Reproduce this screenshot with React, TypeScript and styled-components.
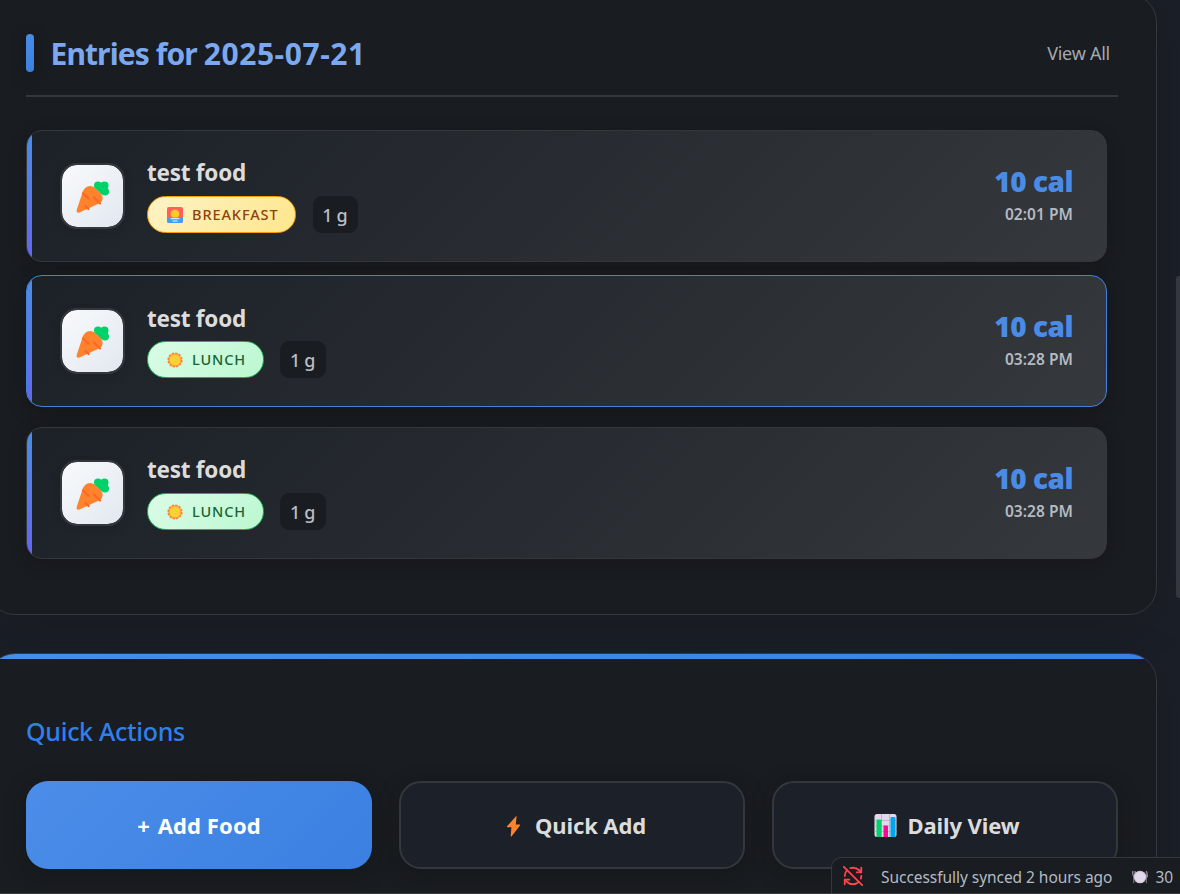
import React from "react";
import styled, { createGlobalStyle, css } from "styled-components";
import { RefreshCwOff } from "lucide-react";

const Global = createGlobalStyle`
  *, *::before, *::after { box-sizing: border-box; }
  html, body { margin: 0; height: 894px; overflow: hidden; background: #1b1f27; }
  body { font-family: "Noto Sans", "Open Sans", sans-serif; color: #d9d9d9; }
  h2, h3, p { margin: 0; }
  button { font: inherit; cursor: pointer; }
`;

const Page = styled.main`
  position: relative;
  display: flex;
  flex-direction: column;
  gap: 38px;
  width: 1180px;
  height: 894px;
  overflow: hidden;
  padding-right: 23px;
  background: #1b1f27;
`;

const panel = css`
  margin-left: -13px;
  width: 1170px;
  flex: none;
  background: #191c20;
  border: 1px solid #34373b;
  border-radius: 28px;
  box-shadow: 0 8px 32px rgba(24, 28, 30, 0.7);
`;

const EntriesPanel = styled.section`
  ${panel}
  margin-top: -6px;
  height: 621px;
  padding: 23px 38px;
`;

const ActionsPanel = styled.section`
  ${panel}
  height: 300px;
  overflow: hidden;
`;

const TopStripe = styled.div`
  height: 5px;
  background: linear-gradient(135deg, #4a8de6, #3b80e2);
`;

const ActionsBody = styled.div`
  padding: 52px 38px 0;
`;

const PanelHeader = styled.header`
  display: flex;
  align-items: center;
  height: 79px;
  padding: 0 8px 7px 0;
  border-bottom: 2px solid #34373b;
`;

const TitleMark = styled.span`
  width: 8px;
  height: 38px;
  margin-right: 16.5px;
  border-radius: 4px;
  background: linear-gradient(135deg, #4a8de6, #3b80e2);
  box-shadow: 0 4px 14px rgba(16, 19, 21, 0.5);
`;

const Title = styled.h2`
  flex: 1;
  padding-top: 1px;
  font-size: 30px;
  line-height: 40px;
  font-weight: 700;
  letter-spacing: -0.9px;
  color: #7ba8ef;
  white-space: nowrap;
`;

const TitleDate = styled.span`
  letter-spacing: 0.55px;
`;

const ViewAll = styled.a`
  font-size: 18px;
  line-height: 24px;
  letter-spacing: -0.25px;
  color: #a3a8ae;
`;

const List = styled.div`
  display: flex;
  flex-direction: column;
  padding: 33px 11px 0 0;
`;

const Card = styled.article<{ $active?: boolean }>`
  display: flex;
  align-items: center;
  height: 132px;
  margin-bottom: ${(p) => (p.$active ? 19.6 : 13.4)}px;
  padding-right: 33px;
  overflow: hidden;
  border: 1px solid ${(p) => (p.$active ? "#4281dc" : "#34373b")};
  border-radius: 16px;
  background: linear-gradient(135deg, #1c2128 0%, #35383c 100%);
  box-shadow: 0 4px 16px rgba(16, 18, 20, ${(p) => (p.$active ? 0.5 : 0.3)});
`;

const Accent = styled.span`
  width: 5px;
  height: 100%;
  background: linear-gradient(180deg, #4a8de6, #6366f1);
`;

const Tile = styled.div`
  display: grid;
  place-items: center;
  width: 65px;
  height: 66px;
  margin-left: 28px;
  border: 2px solid #34373b;
  border-radius: 17px;
  background: linear-gradient(135deg, #f8fafc, #e2e8f0);
  background-clip: padding-box;
  box-shadow: 0 2px 8px rgba(16, 18, 20, 0.1);

  svg { margin-top: 2px; }
`;

const Info = styled.div`
  flex: 1;
  margin-left: 22px;
`;

const FoodName = styled.h3`
  height: 36.2px;
  font-size: 22.5px;
  line-height: 28px;
  font-weight: 700;
  letter-spacing: -0.25px;
  color: #dcdcdc;
`;

const Meta = styled.div`
  display: flex;
  gap: 16.4px;
`;

const MealBadge = styled.span<{ $meal: Meal }>`
  display: flex;
  align-items: center;
  gap: 9px;
  width: ${(p) => (p.$meal === "breakfast" ? 149.3 : 117)}px;
  height: 37px;
  padding-left: 19px;
  border: 1px solid ${(p) => (p.$meal === "breakfast" ? "#f59e0b" : "#22b055")};
  border-radius: 19px;
  background: ${(p) =>
    p.$meal === "breakfast"
      ? "linear-gradient(135deg, #fef3c7, #fde68a)"
      : "linear-gradient(135deg, #dcfce7, #bbf7d0)"};
  background-origin: border-box;
  color: ${(p) => (p.$meal === "breakfast" ? "#92400e" : "#166534")};
  font-size: 14.5px;
  font-weight: 500;
  letter-spacing: 0.9px;
  text-transform: uppercase;

  svg { margin-top: 1px; }
`;

const Amount = styled.span`
  display: grid;
  place-items: center;
  width: 45.3px;
  height: 37px;
  padding: 2px 1px 0 0;
  border-radius: 9px;
  background: #191c20;
  color: #b9bec6;
  font-size: 18px;
  font-weight: 500;
  letter-spacing: -0.3px;
`;

const Totals = styled.div`
  text-align: right;
`;

const Calories = styled.p`
  font-size: 28px;
  line-height: 36px;
  font-weight: 900;
  letter-spacing: -0.5px;
  color: #4a8be6;
`;

const Time = styled.p`
  font-size: 15.5px;
  line-height: 20px;
  margin: 5px 0 5px;
  font-weight: 600;
  letter-spacing: 0.05px;
  color: #b4bac2;
`;

const ActionsTitle = styled.h3`
  font-size: 25px;
  line-height: 40px;
  font-weight: 500;
  letter-spacing: -0.3px;
  color: #2f80ed;
`;

const ActionGrid = styled.div`
  display: grid;
  grid-template-columns: repeat(3, 346px);
  gap: 27px;
  margin-top: 30px;
`;

const Action = styled.button<{ $primary?: boolean }>`
  display: flex;
  align-items: center;
  justify-content: center;
  height: 88px;
  padding: 0 0 0 ${(p) => (p.$primary ? 0 : 3)}px;
  border: ${(p) => (p.$primary ? "0" : "2px solid #34373b")};
  border-radius: 22px;
  background: ${(p) => (p.$primary ? "linear-gradient(135deg, #4b8de8, #3b80e2)" : "#1c2028")};
  color: ${(p) => (p.$primary ? "#fff" : "#dcdcdc")};
  font-size: 22px;
  font-weight: 700;
  letter-spacing: -0.1px;
  box-shadow: 0 4px 20px rgba(16, 19, 21, 0.4);

  svg { margin: 1px 10px 0 0; }
`;

const Plus = styled.span`
  margin-right: 8px;
`;

const AddLabel = styled.span`
  letter-spacing: 0.1px;
`;

const WindowEdge = styled.div`
  position: absolute;
  left: 0;
  right: 0;
  bottom: 0;
  height: 1px;
  background: #3a3a3d;
`;

const ScrollThumb = styled.div`
  position: absolute;
  right: 0;
  top: 276px;
  width: 4px;
  height: 322px;
  border-radius: 3px 0 0 3px;
  background: #34373d;
`;

const StatusBar = styled.footer`
  position: absolute;
  right: 0;
  bottom: 1px;
  display: flex;
  align-items: center;
  width: 349px;
  height: 36px;
  padding: 3px 0 0 10px;
  border: solid #34373b;
  border-width: 1px 0 0 1px;
  border-top-left-radius: 10px;
  background: #191c20;
  color: #b3bac4;
  font-size: 15.5px;
  white-space: nowrap;

  svg { flex: none; }
`;

const SyncIcon = styled(RefreshCwOff)`
  margin-top: -3px;
  color: #fb464c;
`;

const SyncText = styled.span`
  width: 232px;
  margin: 0 19px 0 17px;
  letter-spacing: -0.05px;
`;

const Count = styled.span`
  margin-left: 7.5px;
`;

const Carrot = () => (
  <svg width="34" height="34" viewBox="0 0 34 34">
    <circle cx="22" cy="5.5" r="4" fill="#00d26a" />
    <circle cx="28.5" cy="5.5" r="4" fill="#00d26a" />
    <circle cx="29" cy="11.5" r="4" fill="#00d26a" />
    <path d="M21 5l10 7-6 2-5-5z" fill="#00d26a" />
    <path d="M6 14C8 6 14.500 3.800 19.500 8.500l4.500 4c4.500 4.500 3 9.500-2 11.500L3.500 32.500C1.500 33.500.2 32 .7 30z" fill="#ff822d" />
    <path d="M7 13.500l5.500 5M18 17.500l6 6M9.500 26l3 3" stroke="#ff6723" strokeWidth="2.200" strokeLinecap="round" />
  </svg>
);

const Sunrise = () => (
  <svg width="16" height="16" viewBox="0 0 16 16">
    <defs>
      <clipPath id="sunrise-frame"><rect width="16" height="16" rx="2" /></clipPath>
    </defs>
    <g clipPath="url(#sunrise-frame)">
      <rect width="16" height="16" fill="#ff5f5c" />
      <circle cx="8" cy="7" r="4.800" fill="#ff822d" />
      <circle cx="8" cy="7" r="4.200" fill="#ffc928" />
      <rect y="10.500" width="16" height="5.500" fill="#3f9ff5" />
      <path d="M4 11.700h8M6 14h4" stroke="#fff" strokeWidth="0.900" strokeLinecap="round" />
    </g>
  </svg>
);

const Sun = () => (
  <svg width="16" height="16" viewBox="0 0 16 16">
    <circle cx="8" cy="8" r="6.800" fill="none" stroke="#ff822d" strokeWidth="1.600" strokeDasharray="2.400 1.160" />
    <circle cx="8" cy="8" r="6.100" fill="#ffcf35" stroke="#ff822d" strokeWidth="0.900" />
  </svg>
);

const Bolt = () => (
  <svg width="24" height="22" viewBox="-5 0 24 22">
    <path d="M10.700 0.500L1 11.300c-.3.500-.1.900.4.900h4L4.700 20.800c0 .8.600.9 1 .4L14 10.500c.3-.5.100-.9-.4-.9H9.800L10.600 1z" fill="#ff822d" />
  </svg>
);

const Chart = () => (
  <svg width="24" height="23" viewBox="-1.5 0 24 23">
    <rect width="22" height="23" rx="2.500" fill="#e1d8ec" />
    <path d="M7 0v23M15 0v23M0 6.500h22M0 12h22M0 17.500h22" stroke="#b4acbc" strokeWidth="0.800" />
    <path d="M2 23V6.500Q2 5.500 3 5.500h3q1 0 1 1V23z" fill="#00d26a" />
    <path d="M9 23V12.500q0-1 1-1h2.500q1 0 1 1V23z" fill="#f70a8d" />
    <path d="M16 23V4q0-1 1-1h3q1 0 1 1v19z" fill="#00a6ed" />
  </svg>
);

const Plate = () => (
  <svg width="16" height="16" viewBox="0 0 16 16">
    <path d="M.5 2v3.500c0 1 .7 1.500 1.300 1.500v7M2 2v5M3.300 2v4M14.300 14V2c1 1 1.200 3 1.200 6h-1.200" stroke="#998ea4" strokeWidth="0.900" fill="none" />
    <circle cx="8" cy="8" r="6.300" fill="#cdc4d6" />
    <circle cx="8" cy="8" r="5.300" fill="#e1d8ec" />
  </svg>
);

type Meal = "breakfast" | "lunch";

const entries: { id: number; meal: Meal; time: string; active?: boolean }[] = [
  { id: 1, meal: "breakfast", time: "02:01 PM" },
  { id: 2, meal: "lunch", time: "03:28 PM", active: true },
  { id: 3, meal: "lunch", time: "03:28 PM" },
];

export default function App() {
  return (
    <>
      <Global />
      <Page>
        <EntriesPanel>
          <PanelHeader>
            <TitleMark />
            <Title>Entries for <TitleDate>2025-07-21</TitleDate></Title>
            <ViewAll>View All</ViewAll>
          </PanelHeader>
          <List>
            {entries.map((e) => (
              <Card key={e.id} $active={e.active}>
                <Accent />
                <Tile><Carrot /></Tile>
                <Info>
                  <FoodName>test food</FoodName>
                  <Meta>
                    <MealBadge $meal={e.meal}>
                      {e.meal === "breakfast" ? <Sunrise /> : <Sun />}
                      {e.meal}
                    </MealBadge>
                    <Amount>1 g</Amount>
                  </Meta>
                </Info>
                <Totals>
                  <Calories>10 cal</Calories>
                  <Time>{e.time}</Time>
                </Totals>
              </Card>
            ))}
          </List>
        </EntriesPanel>
        <ActionsPanel>
          <TopStripe />
          <ActionsBody>
            <ActionsTitle>Quick Actions</ActionsTitle>
            <ActionGrid>
              <Action $primary><Plus>+</Plus><AddLabel>Add Food</AddLabel></Action>
              <Action><Bolt />Quick Add</Action>
              <Action><Chart />Daily View</Action>
            </ActionGrid>
          </ActionsBody>
        </ActionsPanel>
        <ScrollThumb />
        <StatusBar>
          <SyncIcon size={22} />
          <SyncText>Successfully synced 2 hours ago</SyncText>
          <Plate />
          <Count>30</Count>
        </StatusBar>
        <WindowEdge />
      </Page>
    </>
  );
}
